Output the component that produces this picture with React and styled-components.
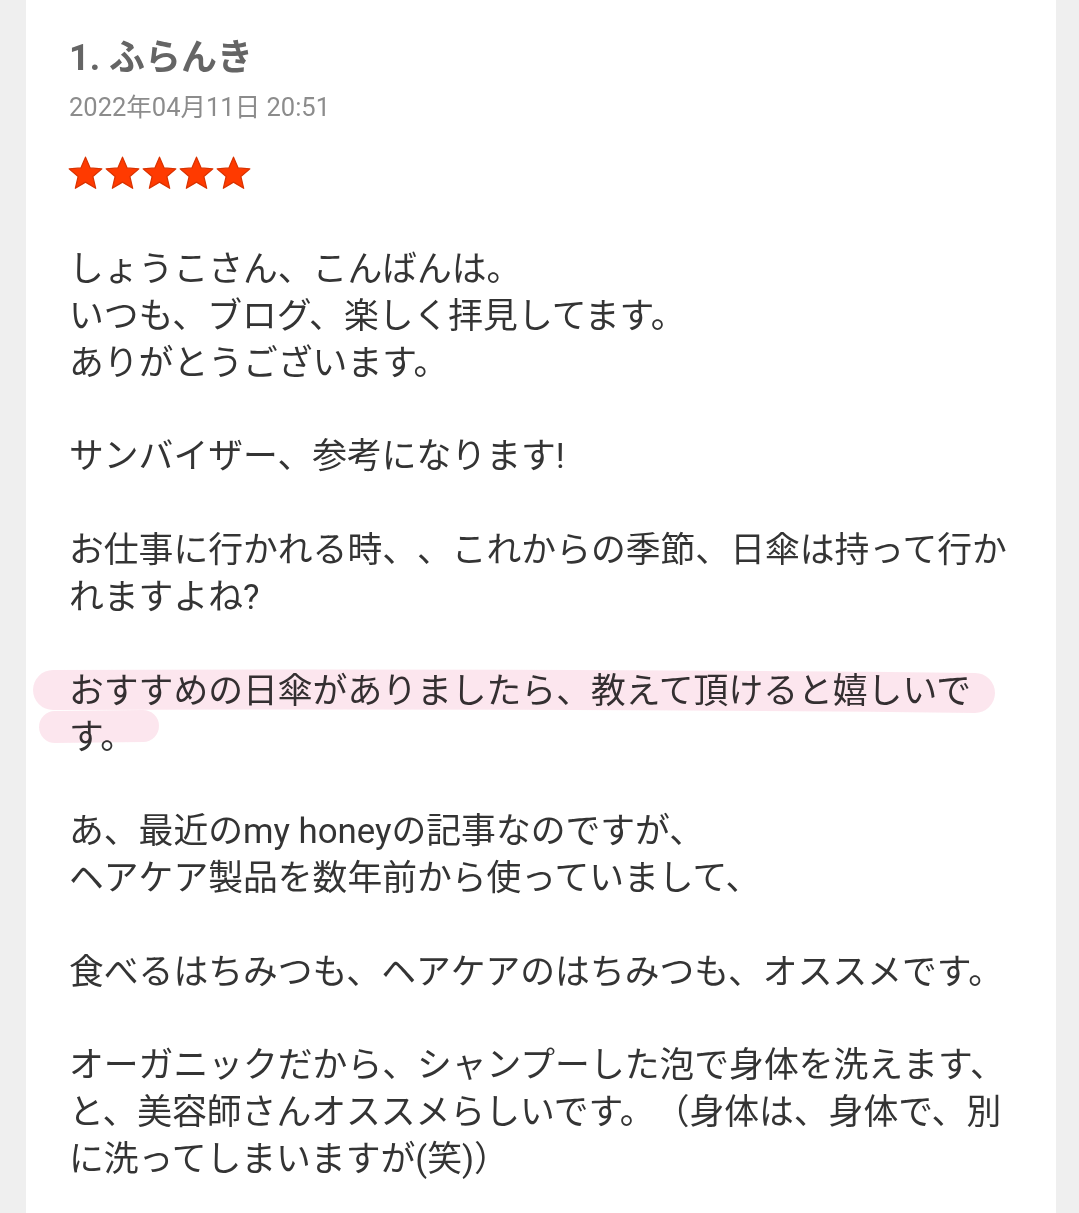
import React from "react";
import styled, { createGlobalStyle } from "styled-components";

const Global = createGlobalStyle`
  html, body { margin: 0; padding: 0; }
  body {
    background: #efefef;
    font-family: Roboto, "Noto Sans CJK JP", "Noto Sans", sans-serif;
    text-spacing-trim: space-all;
  }
`;

const Page = styled.div`
  display: flex;
  min-height: 1213px;
  padding-left: 26px;
`;

const Card = styled.article`
  width: 1030px;
  box-sizing: border-box;
  background: #ffffff;
  padding: 34px 32px 40px 43px;
`;

const Title = styled.h2`
  margin: 0;
  font-size: 36px;
  line-height: 48px;
  font-weight: 700;
  color: #656565;
`;

const DateLine = styled.div`
  margin-top: 8px;
  font-size: 25.5px;
  line-height: 34px;
  color: #8c8c8c;
`;

const Stars = styled.div`
  display: flex;
  margin-top: 31px;
  margin-left: -2px;
  height: 37px;
`;

const Body = styled.div`
  margin-top: 54px;
  font-size: 34.8px;
  line-height: 46.85px;
  color: #343434;
  text-spacing-trim: space-all;
`;

const Para = styled.p`
  position: relative;
  margin: 0 0 46.85px;
`;

const Marker = styled.svg`
  position: absolute;
  left: -40px;
  top: 0;
  width: 1000px;
  height: 94px;
  overflow: visible;
  pointer-events: none;
  mix-blend-mode: multiply;
`;

const Star = ({ size = 37 }) => (
  <svg width={size} height={size} viewBox="0 0 24 24">
    <polygon
      points="12,1.4 15,8.4 22.6,9 16.8,14 18.6,21.6 12,17.6 5.4,21.6 7.2,14 1.4,9 9,8.4"
      fill="#ff3a00"
      stroke="#d93200"
      strokeWidth="0.8"
      strokeLinejoin="round"
    />
  </svg>
);

export default function App() {
  return (
    <>
      <Global />
      <Page>
        <Card>
          <Title>1. ふらんき</Title>
          <DateLine>2022年04月11日 20:51</DateLine>
          <Stars>
            {[0, 1, 2, 3, 4].map((i) => (
              <Star key={i} />
            ))}
          </Stars>
          <Body>
            <Para>
              しょうこさん、こんばんは。
              <br />
              いつも、ブログ、楽しく拝見してます。
              <br />
              ありがとうございます。
            </Para>
            <Para>サンバイザー、参考になります!</Para>
            <Para>お仕事に行かれる時、、これからの季節、日傘は持って行かれますよね?</Para>
            <Para>
              <Marker viewBox="0 0 1000 94">
                <path
                  d="M24 22 Q 480 20 946 25"
                  stroke="#fad6e3"
                  strokeOpacity="0.6"
                  strokeWidth="40"
                  strokeLinecap="round"
                  fill="none"
                />
                <path
                  d="M26 59 L 114 58"
                  stroke="#fad6e3"
                  strokeOpacity="0.6"
                  strokeWidth="32"
                  strokeLinecap="round"
                  fill="none"
                />
              </Marker>
              おすすめの日傘がありましたら、教えて頂けると嬉しいです。
            </Para>
            <Para>
              あ、最近のmy honeyの記事なのですが、
              <br />
              ヘアケア製品を数年前から使っていまして、
            </Para>
            <Para>食べるはちみつも、ヘアケアのはちみつも、オススメです。</Para>
            <Para>
              オーガニックだから、シャンプーした泡で身体を洗えます、と、美容師さんオススメらしいです。（身体は、身体で、別に洗ってしまいますが(笑)）
            </Para>
          </Body>
        </Card>
      </Page>
    </>
  );
}
